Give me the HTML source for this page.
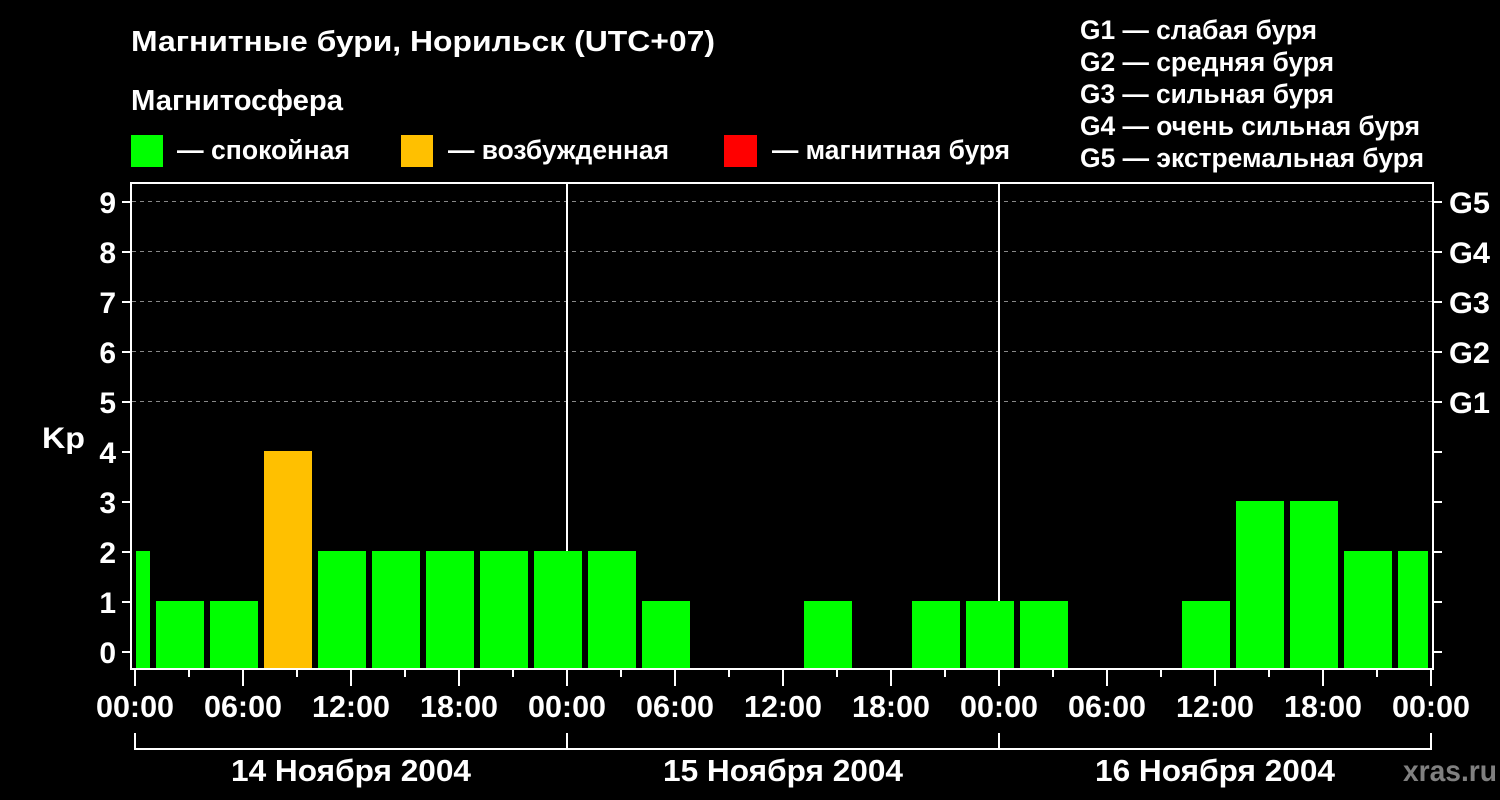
<!DOCTYPE html>
<html><head><meta charset="utf-8"><style>
html,body{margin:0;padding:0;background:#000;}
svg{display:block}
text{font-family:"Liberation Sans",Arial,sans-serif;font-weight:bold;fill:#fff}
</style></head><body>
<svg width="1500" height="800" viewBox="0 0 1500 800" xmlns="http://www.w3.org/2000/svg">
<rect width="1500" height="800" fill="#000"/>
<text x="131" y="51" font-size="29" textLength="584" lengthAdjust="spacingAndGlyphs">Магнитные бури, Норильск (UTC+07)</text>
<text x="131" y="110" font-size="29" textLength="212" lengthAdjust="spacingAndGlyphs">Магнитосфера</text>
<rect x="131" y="135" width="32" height="32" fill="#00ff00"/>
<text x="177" y="159" font-size="27" textLength="173" lengthAdjust="spacingAndGlyphs">— спокойная</text>
<rect x="401" y="135" width="32" height="32" fill="#ffc000"/>
<text x="448" y="159" font-size="27" textLength="221" lengthAdjust="spacingAndGlyphs">— возбужденная</text>
<rect x="724" y="135" width="33" height="32" fill="#ff0000"/>
<text x="772" y="159" font-size="27" textLength="238" lengthAdjust="spacingAndGlyphs">— магнитная буря</text>
<g font-size="27">
<text x="1080" y="39" textLength="237" lengthAdjust="spacingAndGlyphs">G1 — слабая буря</text>
<text x="1080" y="71" textLength="254" lengthAdjust="spacingAndGlyphs">G2 — средняя буря</text>
<text x="1080" y="103" textLength="254" lengthAdjust="spacingAndGlyphs">G3 — сильная буря</text>
<text x="1080" y="135" textLength="340" lengthAdjust="spacingAndGlyphs">G4 — очень сильная буря</text>
<text x="1080" y="167" textLength="344" lengthAdjust="spacingAndGlyphs">G5 — экстремальная буря</text>
</g>
<g stroke="#888" stroke-width="1" stroke-dasharray="4,4">
<line x1="132" y1="201.5" x2="1432" y2="201.5"/>
<line x1="132" y1="251.5" x2="1432" y2="251.5"/>
<line x1="132" y1="301.5" x2="1432" y2="301.5"/>
<line x1="132" y1="351.5" x2="1432" y2="351.5"/>
<line x1="132" y1="401.5" x2="1432" y2="401.5"/>
</g>
<g stroke="#fff" stroke-width="2">
<line x1="567" y1="183" x2="567" y2="668"/>
<line x1="999" y1="183" x2="999" y2="668"/>
</g>
<g fill="#00ff00">
<rect x="136" y="551" width="14" height="117"/>
<rect x="156" y="601" width="48" height="67"/>
<rect x="210" y="601" width="48" height="67"/>
<rect x="318" y="551" width="48" height="117"/>
<rect x="372" y="551" width="48" height="117"/>
<rect x="426" y="551" width="48" height="117"/>
<rect x="480" y="551" width="48" height="117"/>
<rect x="534" y="551" width="48" height="117"/>
<rect x="588" y="551" width="48" height="117"/>
<rect x="642" y="601" width="48" height="67"/>
<rect x="804" y="601" width="48" height="67"/>
<rect x="912" y="601" width="48" height="67"/>
<rect x="966" y="601" width="48" height="67"/>
<rect x="1020" y="601" width="48" height="67"/>
<rect x="1182" y="601" width="48" height="67"/>
<rect x="1236" y="501" width="48" height="167"/>
<rect x="1290" y="501" width="48" height="167"/>
<rect x="1344" y="551" width="48" height="117"/>
<rect x="1398" y="551" width="30" height="117"/>
</g>
<rect x="264" y="451" width="48" height="217" fill="#ffc000"/>
<g stroke="#fff" stroke-width="2" fill="none">
<path d="M131 183 H1433 V669 H131 Z"/>
</g>
<g stroke="#fff" stroke-width="2">
<line x1="122" y1="652" x2="131" y2="652"/><line x1="1433" y1="652" x2="1442" y2="652"/>
<line x1="122" y1="602" x2="131" y2="602"/><line x1="1433" y1="602" x2="1442" y2="602"/>
<line x1="122" y1="552" x2="131" y2="552"/><line x1="1433" y1="552" x2="1442" y2="552"/>
<line x1="122" y1="502" x2="131" y2="502"/><line x1="1433" y1="502" x2="1442" y2="502"/>
<line x1="122" y1="452" x2="131" y2="452"/><line x1="1433" y1="452" x2="1442" y2="452"/>
<line x1="122" y1="402" x2="131" y2="402"/><line x1="1433" y1="402" x2="1442" y2="402"/>
<line x1="122" y1="352" x2="131" y2="352"/><line x1="1433" y1="352" x2="1442" y2="352"/>
<line x1="122" y1="302" x2="131" y2="302"/><line x1="1433" y1="302" x2="1442" y2="302"/>
<line x1="122" y1="252" x2="131" y2="252"/><line x1="1433" y1="252" x2="1442" y2="252"/>
<line x1="122" y1="202" x2="131" y2="202"/><line x1="1433" y1="202" x2="1442" y2="202"/>
</g>
<g stroke="#fff" stroke-width="2">
<line x1="135" y1="670" x2="135" y2="686"/>
<line x1="189" y1="670" x2="189" y2="677"/>
<line x1="243" y1="670" x2="243" y2="686"/>
<line x1="297" y1="670" x2="297" y2="677"/>
<line x1="351" y1="670" x2="351" y2="686"/>
<line x1="405" y1="670" x2="405" y2="677"/>
<line x1="459" y1="670" x2="459" y2="686"/>
<line x1="513" y1="670" x2="513" y2="677"/>
<line x1="567" y1="670" x2="567" y2="686"/>
<line x1="621" y1="670" x2="621" y2="677"/>
<line x1="675" y1="670" x2="675" y2="686"/>
<line x1="729" y1="670" x2="729" y2="677"/>
<line x1="783" y1="670" x2="783" y2="686"/>
<line x1="837" y1="670" x2="837" y2="677"/>
<line x1="891" y1="670" x2="891" y2="686"/>
<line x1="945" y1="670" x2="945" y2="677"/>
<line x1="999" y1="670" x2="999" y2="686"/>
<line x1="1053" y1="670" x2="1053" y2="677"/>
<line x1="1107" y1="670" x2="1107" y2="686"/>
<line x1="1161" y1="670" x2="1161" y2="677"/>
<line x1="1215" y1="670" x2="1215" y2="686"/>
<line x1="1269" y1="670" x2="1269" y2="677"/>
<line x1="1323" y1="670" x2="1323" y2="686"/>
<line x1="1377" y1="670" x2="1377" y2="677"/>
<line x1="1431" y1="670" x2="1431" y2="686"/>
<path d="M135 733 V749 H1431 V733 M567 733 V749 M999 733 V749" fill="none"/>
</g>
<g font-size="30" text-anchor="end">
<text x="116" y="663">0</text><text x="116" y="613">1</text><text x="116" y="563">2</text>
<text x="116" y="513">3</text><text x="116" y="463">4</text><text x="116" y="413">5</text>
<text x="116" y="363">6</text><text x="116" y="313">7</text><text x="116" y="263">8</text>
<text x="116" y="213">9</text>
</g>
<g font-size="30">
<text x="1449" y="213" textLength="41" lengthAdjust="spacingAndGlyphs">G5</text>
<text x="1449" y="263" textLength="41" lengthAdjust="spacingAndGlyphs">G4</text>
<text x="1449" y="313" textLength="41" lengthAdjust="spacingAndGlyphs">G3</text>
<text x="1449" y="363" textLength="41" lengthAdjust="spacingAndGlyphs">G2</text>
<text x="1449" y="413" textLength="41" lengthAdjust="spacingAndGlyphs">G1</text>
</g>
<text x="42" y="448" font-size="30" textLength="43" lengthAdjust="spacingAndGlyphs">Kp</text>
<g font-size="31" text-anchor="middle">
<text x="135" y="717" textLength="78" lengthAdjust="spacingAndGlyphs">00:00</text><text x="243" y="717" textLength="78" lengthAdjust="spacingAndGlyphs">06:00</text><text x="351" y="717" textLength="78" lengthAdjust="spacingAndGlyphs">12:00</text><text x="459" y="717" textLength="78" lengthAdjust="spacingAndGlyphs">18:00</text>
<text x="567" y="717" textLength="78" lengthAdjust="spacingAndGlyphs">00:00</text><text x="675" y="717" textLength="78" lengthAdjust="spacingAndGlyphs">06:00</text><text x="783" y="717" textLength="78" lengthAdjust="spacingAndGlyphs">12:00</text><text x="891" y="717" textLength="78" lengthAdjust="spacingAndGlyphs">18:00</text>
<text x="999" y="717" textLength="78" lengthAdjust="spacingAndGlyphs">00:00</text><text x="1107" y="717" textLength="78" lengthAdjust="spacingAndGlyphs">06:00</text><text x="1215" y="717" textLength="78" lengthAdjust="spacingAndGlyphs">12:00</text><text x="1323" y="717" textLength="78" lengthAdjust="spacingAndGlyphs">18:00</text>
<text x="1431" y="717" textLength="78" lengthAdjust="spacingAndGlyphs">00:00</text>
</g>
<g font-size="31">
<text x="231" y="781" textLength="240" lengthAdjust="spacingAndGlyphs">14 Ноября 2004</text>
<text x="663" y="781" textLength="240" lengthAdjust="spacingAndGlyphs">15 Ноября 2004</text>
<text x="1095" y="781" textLength="240" lengthAdjust="spacingAndGlyphs">16 Ноября 2004</text>
</g>
<text x="1403" y="781" font-size="30" textLength="94" lengthAdjust="spacingAndGlyphs" style="fill:#808080">xras.ru</text>
</svg>
</body></html>
